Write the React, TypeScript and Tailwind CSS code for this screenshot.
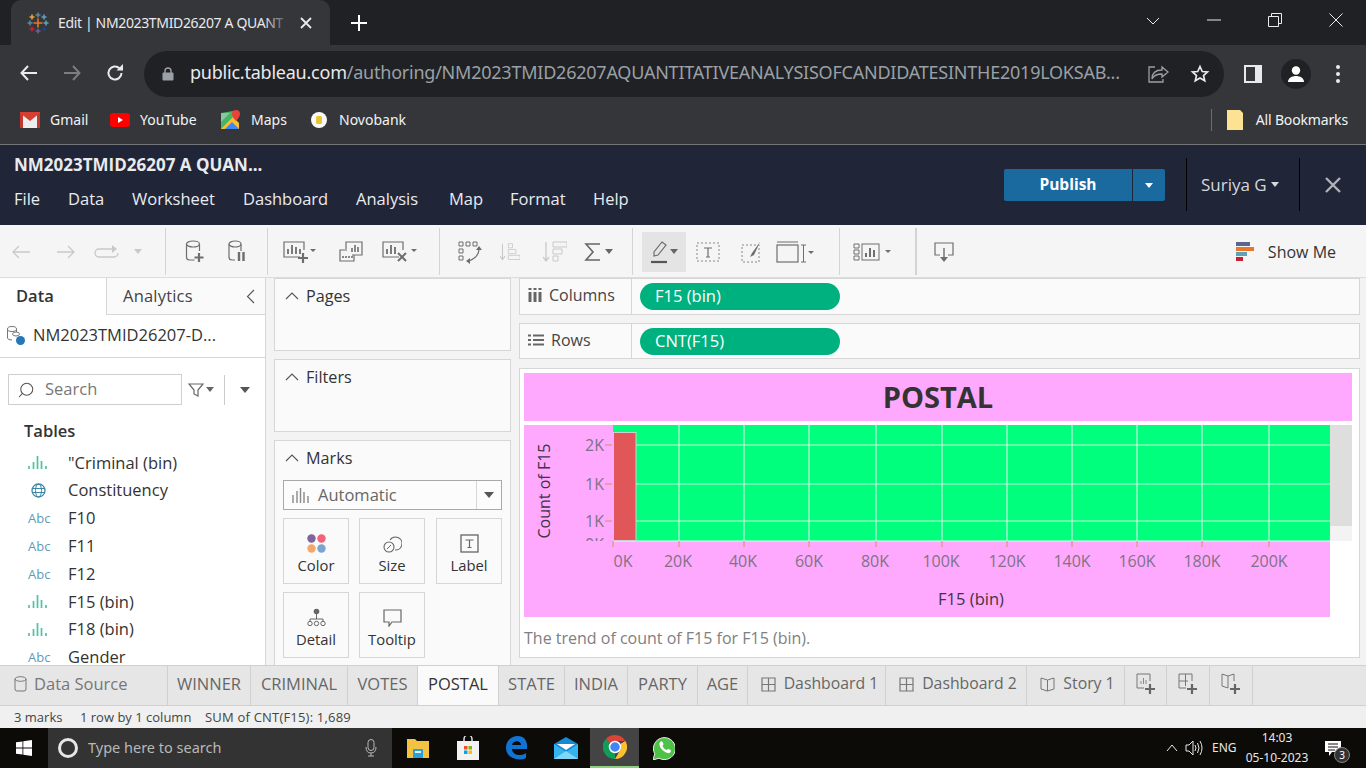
import type { ReactNode } from 'react'
import { Search } from 'lucide-react'

const ui = "font-['Open_Sans',sans-serif]"

function Caret({ className = 'border-t-[#666]' }: { className?: string }) {
  return <span className={`inline-block w-0 h-0 border-x-[4px] border-x-transparent border-t-[5px] ${className}`} />
}

function TableauLogo() {
  const plus = (x: number, y: number, s: number, c: string) => (
    <path key={`${x}${y}`} d={`M${x - s} ${y}H${x + s}M${x} ${y - s}V${y + s}`} stroke={c} strokeWidth="1.6" />
  )
  return (
    <svg width="22" height="22" viewBox="0 0 22 22">
      {plus(11, 11, 4.5, '#e8762d')}
      {plus(11, 3, 2.5, '#5b879b')}
      {plus(11, 19, 2.5, '#5c6692')}
      {plus(3, 11, 2.5, '#5b879b')}
      {plus(19, 11, 2.5, '#5fa2b8')}
      {plus(5, 5, 2.5, '#e8a33d')}
      {plus(17, 5, 2.5, '#5fa2b8')}
      {plus(5, 17, 2.5, '#c72035')}
      {plus(17, 17, 2.5, '#1f447e')}
    </svg>
  )
}

function Bookmark({ icon, label, w }: { icon: ReactNode; label: string; w: string }) {
  return (
    <div className={`flex items-center ${w}`}>
      <span className="w-[22px] flex justify-center">{icon}</span>
      <span className="ml-[9px] text-[14px] text-[#f1f3f4]">{label}</span>
    </div>
  )
}

function BrowserChrome() {
  return (
    <div className={`font-['Noto_Sans',sans-serif]`}>
      <div className="h-[45px] bg-[#202124] flex items-end">
        <div className="ml-[11px] w-[319px] h-[45px] rounded-t-[10px] bg-[#35363a] flex items-center pl-[16px] pr-[13px]">
          <TableauLogo />
          <div className="relative ml-[9px] w-[232px] overflow-hidden whitespace-nowrap text-[14px] tracking-[-0.35px] text-[#e8eaed]">
            Edit | NM2023TMID26207 A QUANT
            <span className="absolute right-0 top-0 h-full w-[26px] bg-gradient-to-r from-transparent to-[#35363a]" />
          </div>
          <svg width="12" height="12" viewBox="0 0 12 12" className="ml-[10px]">
            <path d="M1 1l10 10M11 1L1 11" stroke="#e8eaed" strokeWidth="1.8" />
          </svg>
        </div>
        <svg width="16" height="16" viewBox="0 0 16 16" className="ml-[21px] mb-[14px]">
          <path d="M8 0v16M0 8h16" stroke="#fff" strokeWidth="2" />
        </svg>
        <div className="ml-auto h-[45px] flex items-center">
          <svg width="14" height="8" viewBox="0 0 14 8" className="mr-[47px] mb-[3px]">
            <path d="M1 1l6 6 6-6" stroke="#e8eaed" fill="none" />
          </svg>
          <svg width="14" height="2" viewBox="0 0 14 2" className="mr-[47px] mb-[6px]">
            <path d="M0 1h14" stroke="#e8eaed" />
          </svg>
          <svg width="14" height="14" viewBox="0 0 14 14" className="mr-[47px] mb-[6px]">
            <path d="M.5 3.5h10v10H.5zM3.5 3V.5h10v10H11" stroke="#e8eaed" fill="none" />
          </svg>
          <svg width="14" height="14" viewBox="0 0 14 14" className="mr-[23px] mb-[6px]">
            <path d="M.5.5l13 13M13.5.5l-13 13" stroke="#e8eaed" />
          </svg>
        </div>
      </div>

      <div className="h-[53px] bg-[#35363a] flex items-center pt-[5px]">
        <svg width="18" height="16" viewBox="0 0 18 16" className="ml-[20px] -mt-[3px]">
          <path d="M17 8H2M8 1L1.500 8 8 15" stroke="#e8eaed" strokeWidth="2" fill="none" />
        </svg>
        <svg width="18" height="16" viewBox="0 0 18 16" className="ml-[25px] -mt-[3px]">
          <path d="M1 8h15M10 1l6.500 7L10 15" stroke="#7b7d80" strokeWidth="2" fill="none" />
        </svg>
        <svg width="18" height="18" viewBox="0 0 18 18" className="ml-[25px] -mt-[3px]">
          <path d="M15.500 9a6.500 6.500 0 1 1-2-4.700" stroke="#e8eaed" strokeWidth="2" fill="none" />
          <path d="M10.500 6.500H17V0z" fill="#e8eaed" />
        </svg>
        <div className="ml-[20px] w-[1080px] h-[46px] rounded-full bg-[#202124] flex items-center">
          <svg width="12" height="14" viewBox="0 0 12 14" className="ml-[18px]">
            <path d="M3 6V4a3 3 0 0 1 6 0v2" stroke="#9aa0a6" strokeWidth="1.400" fill="none" />
            <rect x="0.500" y="5.500" width="11" height="8" rx="1" fill="#9aa0a6" />
          </svg>
          <span className="ml-[16px] pb-[3px] w-[932px] whitespace-nowrap overflow-hidden text-[18px] tracking-[-0.23px] text-[#9aa0a6]">
            <span className="text-[#e8eaed]">public.tableau.com</span>
            /authoring/NM2023TMID26207AQUANTITATIVEANALYSISOFCANDIDATESINTHE2019LOKSAB...
          </span>
          <svg width="22" height="20" viewBox="0 0 22 20" className="ml-[25px]">
            <path d="M15 3l6 5-6 5v-3c-5 0-8 1-10 5 0-5 3-9 10-9zM8 3H2v15h14v-3" stroke="#9aa0a6" strokeWidth="1.300" fill="none" />
          </svg>
          <svg width="20" height="20" viewBox="0 0 24 24" className="ml-[21px]">
            <path d="M12 3l2.700 6 6.300.6-4.800 4.200 1.500 6.400L12 16.800l-5.700 3.400 1.500-6.400L3 9.600 9.300 9z" stroke="#e8eaed" strokeWidth="2" fill="none" />
          </svg>
        </div>
        <svg width="18" height="18" viewBox="0 0 18 18" className="ml-[20px]">
          <rect x="0" y="0" width="18" height="18" fill="#e8eaed" />
          <rect x="2" y="2" width="9" height="14" fill="#35363a" />
        </svg>
        <div className="ml-[19px] w-[30px] h-[30px] rounded-full bg-[#202124] flex items-center justify-center">
          <svg width="18" height="16" viewBox="0 0 18 16">
            <circle cx="9" cy="4.500" r="4.200" fill="#fff" />
            <path d="M1 16c0-4 4-6 8-6s8 2 8 6z" fill="#fff" />
          </svg>
        </div>
        <svg width="4" height="18" viewBox="0 0 4 18" className="ml-[25px]">
          <circle cx="2" cy="2" r="2" fill="#e8eaed" />
          <circle cx="2" cy="9" r="2" fill="#e8eaed" />
          <circle cx="2" cy="16" r="2" fill="#e8eaed" />
        </svg>
      </div>

      <div className="h-[47px] bg-[#35363a] border-b border-[#75767a] flex items-center pl-[19px] pb-[3px]">
        <Bookmark
          w="w-[90px]"
          label="Gmail"
          icon={
            <svg width="20" height="16" viewBox="0 0 20 16">
              <rect width="20" height="16" fill="#eee" />
              <path d="M0 0h3v16H0zM17 0h3v16h-3z" fill="#c5392c" />
              <path d="M0 1l10 8 10-8V0H0z" fill="#d93f30" />
            </svg>
          }
        />
        <Bookmark
          w="w-[111px]"
          label="YouTube"
          icon={
            <svg width="20" height="14" viewBox="0 0 20 14">
              <rect width="20" height="14" rx="3" fill="#f00" />
              <path d="M8 4l5 3-5 3z" fill="#fff" />
            </svg>
          }
        />
        <Bookmark
          w="w-[88px]"
          label="Maps"
          icon={
            <svg width="20" height="20" viewBox="0 0 20 20">
              <path d="M0 3l12-2v18L0 19z" fill="#48b564" />
              <path d="M0 19L12 7l6 6v6z" fill="#fdbf2d" />
              <path d="M0 3h9L0 12z" fill="#88c7a0" />
              <path d="M4 19l7-7 7 7z" fill="#4285f4" />
              <path d="M15 0a4 4 0 0 1 4 4c0 3-4 7-4 7s-4-4-4-7a4 4 0 0 1 4-4z" fill="#ea4335" />
            </svg>
          }
        />
        <Bookmark
          w="w-[150px]"
          label="Novobank"
          icon={
            <svg width="16" height="16" viewBox="0 0 16 16">
              <circle cx="8" cy="8" r="8" fill="#fafafa" />
              <rect x="5" y="4" width="6" height="8" rx="1.500" fill="#e9c62d" />
            </svg>
          }
        />
        <div className="ml-auto h-[22px] w-px bg-[#6b6c70]" />
        <svg width="16" height="20" viewBox="0 0 16 20" className="ml-[15px]">
          <path d="M0 0h13l3 3v17H0z" fill="#fde293" />
        </svg>
        <span className="ml-[13px] mr-[18px] text-[14px] tracking-[-0.15px] text-[#f1f3f4]">All Bookmarks</span>
      </div>
    </div>
  )
}

function TableauHeader() {
  const menu = [
    ['File', 'w-[54px]'],
    ['Data', 'w-[64px]'],
    ['Worksheet', 'w-[111px]'],
    ['Dashboard', 'w-[113px]'],
    ['Analysis', 'w-[93px]'],
    ['Map', 'w-[61px]'],
    ['Format', 'w-[83px]'],
    ['Help', 'w-[50px]'],
  ]
  return (
    <div className={`h-[80px] bg-[#212538] flex text-[#e9ebee] ${ui}`}>
      <div className="pl-[14px] flex-1">
        <div className="mt-[9px] h-[22px] leading-[22px] text-[17px] font-bold">NM2023TMID26207 A QUAN...</div>
        <div className="mt-[12px] flex text-[16.500px] leading-[22px]">
          {menu.map(([m, w]) => (
            <span key={m} className={w}>
              {m}
            </span>
          ))}
        </div>
      </div>
      <div className="mt-[24px] h-[32px] w-[161px] rounded-[2px] bg-[#1a699f] flex text-white">
        <span className="w-[128px] text-center font-bold text-[15.500px] leading-[30px]">Publish</span>
        <span className="w-px bg-[#212538]" />
        <span className="flex-1 flex items-center justify-center">
          <Caret className="border-t-white" />
        </span>
      </div>
      <div className="ml-[21px] mt-[13px] h-[53px] w-[114px] border-x border-black flex items-center pl-[14px] text-[17px] text-[#d5d8de]">
        Suriya G
        <Caret className="ml-[4px] border-t-[#d5d8de]" />
      </div>
      <div className="w-[66px] flex items-center justify-center">
        <svg width="16" height="16" viewBox="0 0 16 16">
          <path d="M1 1l14 14M15 1L1 15" stroke="#aeb1b8" strokeWidth="2.400" />
        </svg>
      </div>
    </div>
  )
}

function Slot({ w, children }: { w: string; children?: ReactNode }) {
  return <div className={`${w} h-full flex items-center justify-center`}>{children}</div>
}

function Sep({ className = 'w-px' }: { className?: string }) {
  return <div className={`${className} h-[47px] bg-[#d4d4d4]`} />
}

function Toolbar() {
  const g = '#6e6e6e'
  const l = '#c9c9c9'
  return (
    <div className={`h-[53px] bg-[#f5f5f5] flex items-center ${ui}`}>
      <Slot w="w-[42px]">
        <svg width="20" height="14" viewBox="0 0 20 14"><path d="M19 7H2M8 1L2 7l6 6" stroke={l} strokeWidth="1.300" fill="none" /></svg>
      </Slot>
      <Slot w="w-[48px]">
        <svg width="20" height="14" viewBox="0 0 20 14"><path d="M1 7h17M12 1l6 6-6 6" stroke={l} strokeWidth="1.300" fill="none" /></svg>
      </Slot>
      <Slot w="w-[32px]">
        <svg width="26" height="14" viewBox="0 0 26 14"><path d="M20 4H6a4 4 0 0 0 0 8h15a4 4 0 0 0 4-4" stroke={l} strokeWidth="1.300" fill="none" /><path d="M19 0l5 4-5 4z" fill={l} /></svg>
      </Slot>
      <Slot w="w-[32px]"><Caret className="border-t-[#c9c9c9]" /></Slot>
      <Slot w="w-[11px]" />
      <Sep />
      <Slot w="w-[58px]">
        <svg width="20" height="24" viewBox="0 0 20 24">
          <ellipse cx="8" cy="4" rx="6.500" ry="3" stroke={g} strokeWidth="1.200" fill="none" />
          <path d="M1.500 4v13q0 3 3 3h5M14.500 4v7" stroke={g} strokeWidth="1.200" fill="none" />
          <path d="M14 13v9M9.500 17.500h9" stroke={g} strokeWidth="2.200" />
        </svg>
      </Slot>
      <Slot w="w-[26px]">
        <svg width="18" height="24" viewBox="0 0 18 24">
          <ellipse cx="7" cy="4" rx="6" ry="3" stroke={g} strokeWidth="1.200" fill="none" />
          <path d="M1 4v13q0 3 3 3h3M13 4v7" stroke={g} strokeWidth="1.200" fill="none" />
          <path d="M11 12v9M15.500 12v9" stroke={g} strokeWidth="2.400" />
        </svg>
      </Slot>
      <Slot w="w-[17px]" />
      <Sep />
      <Slot w="w-[64px]">
        <svg width="34" height="24" viewBox="0 0 34 24">
          <path d="M17 17H1V2h20v8" stroke={g} strokeWidth="1.200" fill="none" />
          <path d="M5 9v5M9 5v9M13 7v7M17 9v5" stroke={g} strokeWidth="1.800" />
          <path d="M20 13v10M15 18h10" stroke={g} strokeWidth="2.200" />
          <path d="M27 9h6l-3 3z" fill={g} />
        </svg>
      </Slot>
      <Slot w="w-[38px]">
        <svg width="24" height="22" viewBox="0 0 24 22">
          <path d="M7 8V1h16v13H13M8 9H1v11h14v-6" stroke={g} strokeWidth="1.200" fill="none" />
          <path d="M13 11V7M16 11V4M19 11V6M4 17v-2M7 17v-2M10 17v-2M13 17v-2" stroke={g} strokeWidth="1.600" />
        </svg>
      </Slot>
      <Slot w="w-[60px]">
        <svg width="36" height="24" viewBox="0 0 36 24">
          <path d="M17 17H1V2h20v8" stroke={g} strokeWidth="1.200" fill="none" />
          <path d="M5 9v5M9 5v9M13 7v7" stroke={g} strokeWidth="1.800" />
          <path d="M16 13l8 8M24 13l-8 8" stroke={g} strokeWidth="2" />
          <path d="M29 9h6l-3 3z" fill={g} />
        </svg>
      </Slot>
      <Slot w="w-[9px]" />
      <Sep />
      <Slot w="w-[60px]">
        <svg width="24" height="24" viewBox="0 0 24 24">
          <path d="M1 2h4v4H1zM8 2h4v4H8zM15 2h4v4h-4zM1 9h4v4H1zM1 16h4v4H1z" stroke={g} fill="none" />
          <path d="M21 9q0 8-10 12" stroke={g} strokeWidth="1.200" fill="none" />
          <path d="M18 10l3-4 3 4zM12 18v6l-4-3z" fill={g} />
        </svg>
      </Slot>
      <Slot w="w-[20px]">
        <svg width="24" height="24" viewBox="0 0 24 24">
          <path d="M3 2v18M0 17l3 4 3-4" stroke={l} strokeWidth="1.300" fill="none" />
          <path d="M10 2h5v5h-5zM10 9h9v5h-9zM10 16h14v5H10z" stroke={l} fill="none" />
        </svg>
      </Slot>
      <Slot w="w-[70px]">
        <svg width="24" height="24" viewBox="0 0 24 24">
          <path d="M3 2v18M0 17l3 4 3-4" stroke={l} strokeWidth="1.300" fill="none" />
          <path d="M10 2h14v5H10zM10 9h9v5h-9zM10 16h5v5h-5z" stroke={l} fill="none" />
        </svg>
      </Slot>
      <Slot w="w-[16px]">
        <span className="flex items-center text-[#555]">
          <svg width="20" height="20" viewBox="0 0 20 20" className="shrink-0">
            <path d="M17 2H3l7 8-7 8h14" stroke="#666" strokeWidth="1.600" fill="none" />
          </svg>
          <Caret className="ml-[2px] border-t-[#666]" />
        </span>
      </Slot>
      <Slot w="w-[26px]" />
      <Sep />
      <Slot w="w-[9px]" />
      <div className="w-[44px] h-[40px] bg-[#e4e4e4] flex items-center justify-center">
        <svg width="16" height="24" viewBox="0 0 16 24">
          <path d="M11 2l4 3-8 10-4 1 0-4z" stroke={g} strokeWidth="1.200" fill="none" />
          <path d="M0 22h16" stroke="#555" strokeWidth="2.200" />
        </svg>
        <Caret className="ml-[3px] border-t-[#666]" />
      </div>
      <Slot w="w-[44px]">
        <svg width="24" height="20" viewBox="0 0 24 20">
          <rect x="1" y="1" width="22" height="18" stroke="#888" strokeDasharray="2 2" fill="none" />
          <path d="M8 6h8M12 6v9M10 15h4" stroke={g} strokeWidth="1.200" />
        </svg>
      </Slot>
      <Slot w="w-[44px]">
        <svg width="22" height="22" viewBox="0 0 22 22">
          <rect x="1" y="4" width="17" height="17" stroke="#888" strokeDasharray="2 2" fill="none" />
          <path d="M19 1l-8 11-2 4 4-2z" fill={g} />
        </svg>
      </Slot>
      <Slot w="w-[42px]">
        <svg width="38" height="22" viewBox="0 0 38 22">
          <rect x="1" y="4" width="21" height="17" stroke={g} strokeWidth="1.200" fill="none" />
          <path d="M1 1h21M25 4h5M27.500 4v17M25 21h5" stroke={g} />
          <path d="M32 10h6l-3 3z" fill={g} />
        </svg>
      </Slot>
      <Slot w="w-[23px]" />
      <Sep />
      <Slot w="w-[66px]">
        <svg width="40" height="20" viewBox="0 0 40 20">
          <path d="M1 2h5v4H1zM1 8h5v4H1zM1 14h5v4H1z" stroke={g} fill="none" />
          <rect x="9" y="2" width="17" height="16" stroke={g} fill="none" />
          <path d="M13 15v-4M17 15V6M21 15V8" stroke={g} strokeWidth="2" />
          <path d="M32 8h6l-3 3z" fill={g} />
        </svg>
      </Slot>
      <Slot w="w-[9px]" />
      <Sep className="w-[2px]" />
      <Slot w="w-[54px]">
        <svg width="20" height="20" viewBox="0 0 20 20">
          <path d="M6 13H1V1h18v12h-5" stroke={g} strokeWidth="1.200" fill="none" />
          <path d="M10 6v11" stroke={g} strokeWidth="1.400" />
          <path d="M6 15h8l-4 5z" fill={g} />
        </svg>
      </Slot>
      <div className="ml-auto mr-[30px] flex items-center text-[16px] text-[#333]">
        <svg width="18" height="20" viewBox="0 0 18 20" className="mr-[14px]">
          <path d="M0 0h14v4H0z" fill="#5b6591" />
          <path d="M0 5h18v4H0z" fill="#e8762d" />
          <path d="M0 10h11v4H0z" fill="#5fa2b8" />
          <path d="M0 15h7v4H0z" fill="#c72035" />
        </svg>
        Show Me
      </div>
    </div>
  )
}

const bars = (
  <svg width="19" height="13" viewBox="0 0 19 13">
    <path d="M1 13V10M5.500 13V6M9.500 13V0M13.500 13V5M18 13V10" stroke="#4fc3a1" strokeWidth="1.700" />
  </svg>
)

const globe = (
  <svg width="15" height="15" viewBox="0 0 15 15" className="ml-[3px]">
    <circle cx="7.500" cy="7.500" r="6.500" stroke="#3d87a6" strokeWidth="1.300" fill="none" />
    <ellipse cx="7.500" cy="7.500" rx="3" ry="6.500" stroke="#3d87a6" fill="none" />
    <path d="M1 5.500h13M1 9.500h13" stroke="#3d87a6" />
  </svg>
)

const abc = <span className="text-[13px] font-medium leading-none text-[#5d9cb8]">Abc</span>

const fields: [ReactNode, string][] = [
  [bars, '"Criminal (bin)'],
  [globe, 'Constituency'],
  [abc, 'F10'],
  [abc, 'F11'],
  [abc, 'F12'],
  [bars, 'F15 (bin)'],
  [bars, 'F18 (bin)'],
  [abc, 'Gender'],
]

function DataPane() {
  return (
    <div className="w-[266px] h-full bg-white border-r border-[#d6d6d6] overflow-hidden">
      <div className="h-[37px] flex text-[16.500px]">
        <div className="w-[107px] pl-[16px] leading-[36px] text-[#333] font-semibold border-r border-[#d6d6d6]">Data</div>
        <div className="flex-1 flex items-center pl-[16px] bg-[#fafafa] border-b border-[#d6d6d6] text-[#444] tracking-[0.2px]">
          Analytics
          <svg width="9" height="15" viewBox="0 0 9 15" className="ml-auto mr-[10px]">
            <path d="M8 1L1.500 7.500 8 14" stroke="#555" strokeWidth="1.100" fill="none" />
          </svg>
        </div>
      </div>
      <div className="h-[43px] border-b border-[#d6d6d6] flex items-center pl-[6px] pb-[2px] text-[16.500px] text-[#333]">
        <svg width="20" height="20" viewBox="0 0 20 20">
          <ellipse cx="6" cy="4" rx="4.500" ry="2.500" stroke="#777" fill="none" />
          <path d="M1.500 4v9q0 2 4.500 2M10.500 4v3" stroke="#777" fill="none" />
          <ellipse cx="10" cy="9" rx="3.500" ry="2" stroke="#777" fill="none" />
          <circle cx="14.500" cy="15.500" r="4.500" fill="#2677b5" />
        </svg>
        <span className="ml-[7px]">NM2023TMID26207-D...</span>
      </div>
      <div className="mt-[16px] flex items-center pl-[8px]">
        <div className="w-[174px] h-[31px] border border-[#cfcfcf] flex items-center pl-[8px] text-[16.500px] text-[#777]">
          <Search size={18} strokeWidth={1.400} className="-scale-x-100 text-[#555]" />
          <span className="ml-[10px]">Search</span>
        </div>
        <svg width="16" height="16" viewBox="0 0 16 16" className="ml-[6px]">
          <path d="M1 2h14L10 8v6L6 12V8z" stroke="#666" strokeWidth="1.200" fill="none" />
        </svg>
        <Caret className="ml-[2px] border-t-[#666]" />
        <span className="ml-[10px] w-px h-[30px] bg-[#ccc]" />
        <Caret className="ml-[15px] border-t-[#555] border-x-[5px] border-t-[6px]" />
      </div>
      <div className="mt-[15px] pl-[24px] h-[22px] leading-[22px] text-[16.500px] text-[#333] font-semibold">Tables</div>
      <div className="mt-[7px]">
        {fields.map(([icon, name]) => (
          <div key={name} className="h-[27.800px] flex items-center text-[16.500px] text-[#333]">
            <span className="w-[68px] pl-[28px] flex items-center">{icon}</span>
            {name}
          </div>
        ))}
      </div>
    </div>
  )
}

function CardTitle({ label }: { label: string }) {
  return (
    <div className="h-[36px] flex items-center pl-[10px] pb-[2px] text-[16.200px] text-[#333]">
      <svg width="14" height="8" viewBox="0 0 14 8">
        <path d="M1 7l6-6 6 6" stroke="#555" strokeWidth="1.100" fill="none" />
      </svg>
      <span className="ml-[7px]">{label}</span>
    </div>
  )
}

function MarkButton({ icon, label, className = '' }: { icon: ReactNode; label: string; className?: string }) {
  return (
    <div className={`w-[66px] h-[66px] border border-[#d6d6d6] flex flex-col items-center text-[14.800px] text-[#333] ${className}`}>
      <div className="h-[34px] flex items-end justify-center">{icon}</div>
      <span className="mt-[2px] leading-[20px]">{label}</span>
    </div>
  )
}

function CardsPane() {
  return (
    <div className="w-[237px] ml-[8px] flex flex-col gap-[8px] h-full overflow-hidden">
      <div className="h-[73px] shrink-0 bg-[#fafafa] border border-[#d6d6d6]"><CardTitle label="Pages" /></div>
      <div className="h-[73px] shrink-0 bg-[#fafafa] border border-[#d6d6d6]"><CardTitle label="Filters" /></div>
      <div className="h-[240px] shrink-0 bg-[#fafafa] border border-[#d6d6d6]">
        <CardTitle label="Marks" />
        <div className="ml-[8px] mt-[3px] w-[219px] h-[30px] border border-[#a9a9a9] bg-[#fcfcfc] flex items-center text-[16.500px] text-[#666]">
          <svg width="17" height="15" viewBox="0 0 17 15" className="ml-[8px]">
            <path d="M1 15V7M5 15V3M8.500 15V0M12 15V4M16 15V8" stroke="#888" strokeWidth="1.400" />
          </svg>
          <span className="ml-[9px] pt-[1px]">Automatic</span>
          <span className="ml-auto w-[25px] h-full border-l border-[#d6d6d6] flex items-center justify-center">
            <Caret className="border-t-[#555] border-x-[5px] border-t-[6px]" />
          </span>
        </div>
        <div className="ml-[8px] mt-[8px] flex">
          <MarkButton
            label="Color"
            icon={
              <svg width="19" height="19" viewBox="0 0 19 19">
                <circle cx="4.500" cy="4.500" r="4.200" fill="#80649b" />
                <circle cx="14.500" cy="4.500" r="4.200" fill="#f0637c" />
                <circle cx="4.500" cy="14.500" r="4.200" fill="#f4a76c" />
                <circle cx="14.500" cy="14.500" r="4.200" fill="#7ba5cf" />
              </svg>
            }
          />
          <MarkButton
            className="ml-[10px]"
            label="Size"
            icon={
              <svg width="19" height="19" viewBox="0 0 19 19">
                <path d="M7 6a6.500 6.500 0 1 1 5 10" stroke="#666" strokeWidth="1.100" fill="none" />
                <circle cx="6" cy="13" r="5" stroke="#666" strokeWidth="1.100" fill="none" />
                <path d="M4 15l4-4" stroke="#666" />
              </svg>
            }
          />
          <MarkButton
            className="ml-[11px]"
            label="Label"
            icon={
              <svg width="19" height="19" viewBox="0 0 19 19">
                <rect x="1" y="1" width="17" height="17" stroke="#666" strokeWidth="1.300" fill="none" />
                <path d="M5.500 6h8M9.500 6v7M7.500 13.500h4" stroke="#666" strokeWidth="1.200" fill="none" />
              </svg>
            }
          />
        </div>
        <div className="ml-[8px] mt-[8px] flex">
          <MarkButton
            label="Detail"
            icon={
              <svg width="19" height="19" viewBox="0 0 19 19">
                <circle cx="9.500" cy="3.500" r="2.800" fill="#666" />
                <path d="M9.500 6v5M3 13v-2h13v2" stroke="#666" fill="none" />
                <circle cx="3" cy="15.500" r="2.200" stroke="#666" fill="none" />
                <circle cx="9.500" cy="15.500" r="2.200" stroke="#666" fill="none" />
                <circle cx="16" cy="15.500" r="2.200" stroke="#666" fill="none" />
              </svg>
            }
          />
          <MarkButton
            className="ml-[10px]"
            label="Tooltip"
            icon={
              <svg width="19" height="18" viewBox="0 0 19 18">
                <path d="M1 1h17v12H9l-3 4v-4H1z" stroke="#666" strokeWidth="1.200" fill="none" />
              </svg>
            }
          />
        </div>
      </div>
    </div>
  )
}

function Shelf({ icon, label, pill, h, pt }: { icon: ReactNode; label: string; pill: string; h: string; pt: string }) {
  return (
    <div className={`${h} shrink-0 bg-[#fafafa] border border-[#d6d6d6] flex`}>
      <div className="w-[112px] border-r border-[#d6d6d6] flex items-center pl-[8px] pb-[3px] text-[16px] text-[#444]">
        {icon}
        <span className="ml-[7px]">{label}</span>
      </div>
      <div className={`ml-[8px] ${pt}`}>
        <div className="w-[200px] h-[27px] rounded-full bg-[#00b180] pl-[15px] leading-[25px] text-[16.500px] text-white">{pill}</div>
      </div>
    </div>
  )
}

function Chart() {
  const xs: [number, string, number][] = [
    [89, '0K', 99],
    [155, '20K', 154],
    [220, '40K', 219],
    [285, '60K', 285],
    [352, '80K', 351],
    [418, '100K', 417],
    [483, '120K', 483],
    [548, '140K', 548],
    [613, '160K', 613],
    [678, '180K', 678],
    [745, '200K', 745],
  ]
  const ys: [number, string][] = [
    [20, '2K'],
    [59, '1K'],
    [96, '1K'],
  ]
  return (
    <svg width="828" height="192" viewBox="0 0 828 192" className="block">
      <defs>
        <clipPath id="yaxis">
          <rect x="40" y="0" width="49" height="116" />
        </clipPath>
      </defs>
      <rect width="806" height="192" fill="#ffa9fe" />
      <rect x="806" width="22" height="116" fill="#f3f3f3" />
      <rect x="806" width="22" height="101" fill="#dedede" />
      <rect x="89" width="717" height="116" fill="#00ff7c" />
      {ys.map(([y]) => (
        <line key={y} x1="89" x2="806" y1={y} y2={y} stroke="#c9f5dc" strokeWidth="1.200" />
      ))}
      {xs.slice(1).map(([x]) => (
        <line key={x} x1={x} x2={x} y1="0" y2="116" stroke="#c9f5dc" strokeWidth="1.200" />
      ))}
      <line x1="89" x2="806" y1="116" y2="116" stroke="#eef" strokeWidth="1" />
      <rect x="89.500" y="7.500" width="22.500" height="108" fill="#e15759" stroke="#cfcfcf" />
      {ys.map(([y, t]) => (
        <g key={y}>
          <line x1="81" x2="88" y1={y} y2={y} stroke="#c89a50" />
          <text x="80" y={y + 6} textAnchor="end" fontSize="16" fill="#7d7385" fontFamily="Open Sans, sans-serif">{t}</text>
        </g>
      ))}
      <g clipPath="url(#yaxis)">
        <text x="80" y="125" textAnchor="end" fontSize="16" fill="#7d7385" fontFamily="Open Sans, sans-serif">0K</text>
      </g>
      {xs.map(([x, t, lx]) => (
        <g key={t}>
          <line x1={x} x2={x} y1="116" y2="122" stroke="#c89a50" />
          <text x={lx} y="142" textAnchor="middle" fontSize="16" fill="#7d7385" fontFamily="Open Sans, sans-serif">{t}</text>
        </g>
      ))}
      <text x="447" y="180" textAnchor="middle" fontSize="16.500" fill="#3d3446" fontFamily="Open Sans, sans-serif">F15 (bin)</text>
      <text transform="translate(26 66) rotate(-90)" textAnchor="middle" fontSize="16" fill="#3d3446" fontFamily="Open Sans, sans-serif">Count of F15</text>
    </svg>
  )
}

function ViewPane() {
  return (
    <div className="w-[841px] ml-[8px] h-full flex flex-col">
      <Shelf
        h="h-[37px]"
        pt="pt-[4px]"
        label="Columns"
        pill="F15 (bin)"
        icon={
          <svg width="14" height="14" viewBox="0 0 14 14">
            <path d="M2 4v10M7 4v10M12 4v10" stroke="#666" strokeWidth="3" />
            <path d="M2 0v2M7 0v2M12 0v2" stroke="#666" strokeWidth="3" />
          </svg>
        }
      />
      <div className="h-[8px] shrink-0" />
      <Shelf
        h="h-[36px]"
        pt="pt-[4px]"
        label="Rows"
        pill="CNT(F15)"
        icon={
          <svg width="16" height="12" viewBox="0 0 16 12">
            <path d="M0 1.500h3M5 1.500h11M0 6h3M5 6h11M0 10.500h3M5 10.500h11" stroke="#666" strokeWidth="2" />
          </svg>
        }
      />
      <div className="mt-[9px] h-[290px] bg-white border border-[#d6d6d6] pl-[4px] pt-[4px]">
        <div className="w-[828px] h-[48px] bg-[#ffa9fe] flex items-center justify-center text-[29px] font-bold text-[#333]">POSTAL</div>
        <div className="mt-[4px]"><Chart /></div>
        <div className="mt-[11px] text-[16px] leading-[20px] text-[#808080]">The trend of count of F15 for F15 (bin).</div>
      </div>
    </div>
  )
}

function SheetTab({ w, label, active, icon, cls = 'text-[16.500px]' }: { w: string; label?: string; active?: boolean; icon?: ReactNode; cls?: string }) {
  return (
    <div
      className={`${w} ${cls} shrink-0 h-full flex items-center justify-center pb-[3px] border-r border-[#d0d0d0] ${
        active ? 'bg-[#fafafa] text-[#333]' : 'text-[#666]'
      }`}
    >
      {icon}
      {label && <span className={icon ? 'ml-[8px]' : ''}>{label}</span>}
    </div>
  )
}

const dashIcon = (
  <svg width="15" height="15" viewBox="0 0 15 15">
    <path d="M1 1h13v13H1zM7.500 1v13M1 7.500h13" stroke="#777" strokeWidth="1.200" fill="none" />
  </svg>
)

const storyIcon = (
  <svg width="15" height="15" viewBox="0 0 15 15">
    <path d="M1 1l6.500 2L14 1v11l-6.500 2L1 12zM7.500 3v11" stroke="#777" fill="none" />
  </svg>
)

function PlusIcon({ children }: { children: ReactNode }) {
  return (
    <svg width="22" height="22" viewBox="0 0 22 22">
      {children}
      <path d="M15 11v10M10 16h10" stroke="#666" strokeWidth="2.200" />
    </svg>
  )
}

function SheetTabs() {
  return (
    <div className={`h-[41px] bg-[#e6e6e6] border-y border-[#d0d0d0] flex ${ui}`}>
      <div className="w-[168px] shrink-0 h-full flex items-center pl-[14px] pb-[3px] border-r border-[#d0d0d0] text-[16.500px] text-[#777]">
        <svg width="13" height="16" viewBox="0 0 13 16">
          <ellipse cx="6.500" cy="3" rx="5.500" ry="2.300" stroke="#777" fill="none" />
          <path d="M1 3v10q0 2 2 2h7q2 0 2-2V3" stroke="#777" fill="none" />
        </svg>
        <span className="ml-[7px]">Data Source</span>
      </div>
      <SheetTab w="w-[83px]" label="WINNER" />
      <SheetTab w="w-[97px]" label="CRIMINAL" />
      <SheetTab w="w-[70px]" label="VOTES" />
      <SheetTab w="w-[81px]" label="POSTAL" active />
      <SheetTab w="w-[66px]" label="STATE" />
      <SheetTab w="w-[63px]" label="INDIA" />
      <SheetTab w="w-[70px]" label="PARTY" />
      <SheetTab w="w-[50px]" label="AGE" />
      <SheetTab w="w-[138px]" cls="text-[15.800px] pl-[6px]" label="Dashboard 1" icon={dashIcon} />
      <SheetTab w="w-[141px]" cls="text-[15.800px] pl-[4px]" label="Dashboard 2" icon={dashIcon} />
      <SheetTab w="w-[98px]" cls="text-[15.800px] pl-[4px]" label="Story 1" icon={storyIcon} />
      <SheetTab
        w="w-[42px]"
        icon={
          <PlusIcon>
            <path d="M9 15H2V1h13v7" stroke="#777" fill="none" />
            <path d="M6 11V8M8.500 11V5M11 11V7" stroke="#888" />
          </PlusIcon>
        }
      />
      <SheetTab
        w="w-[43px]"
        icon={
          <PlusIcon>
            <path d="M9 15H2V1h13v7M8.500 1v12M2 8h9" stroke="#777" fill="none" />
          </PlusIcon>
        }
      />
      <SheetTab
        w="w-[43px]"
        icon={
          <PlusIcon>
            <path d="M8 15l-6-2V1l6 2 6-2v7M8 3v12" stroke="#777" fill="none" />
          </PlusIcon>
        }
      />
    </div>
  )
}

function StatusBar() {
  return (
    <div className={`h-[22px] bg-[#f0f0f0] flex items-center pl-[14px] pt-[1px] text-[13px] text-[#444] ${ui}`}>
      <span className="w-[66px]">3 marks</span>
      <span className="w-[125px]">1 row by 1 column</span>
      <span className="tracking-[0.2px]">SUM of CNT(F15): 1,689</span>
    </div>
  )
}

function Taskbar() {
  return (
    <div className="h-[40px] bg-[#0c0b08] flex items-center font-['Noto_Sans',sans-serif]">
      <div className="w-[48px] flex justify-center">
        <svg width="16" height="16" viewBox="0 0 16 16">
          <path d="M0 2.300l6.500-.9v6.200H0zM7.300 1.300L16 0v7.600H7.300zM0 8.400h6.500v6.200L0 13.700zM7.300 8.400H16V16l-8.700-1.300z" fill="#fff" />
        </svg>
      </div>
      <div className="w-[344px] h-[40px] bg-[#333] flex items-center pl-[10px] text-[14.500px] text-[#b8b8b8]">
        <span className="w-[20px] h-[20px] rounded-full border-[3px] border-[#e6e6e6]" />
        <span className="ml-[10px]">Type here to search</span>
        <svg width="12" height="18" viewBox="0 0 12 18" className="ml-auto mr-[15px]">
          <rect x="3" y="0.500" width="6" height="11" rx="3" stroke="#b8b8b8" fill="none" />
          <path d="M1 8q0 6 5 6t5-6M6 14v3M3 17h6" stroke="#b8b8b8" fill="none" />
        </svg>
      </div>
      <div className="w-[50px] ml-[1px] flex justify-center">
        <svg width="22" height="20" viewBox="0 0 22 20">
          <path d="M0 1h8l2 2h12v17H0z" fill="#f4c242" />
          <path d="M6 11h10v9H6z" fill="#2a9fd8" />
          <path d="M8 13h6v2H8z" fill="#dff3fb" />
        </svg>
      </div>
      <div className="w-[49px] flex justify-center">
        <svg width="22" height="24" viewBox="0 0 22 24">
          <path d="M7 6V3a4 4 0 0 1 8 0v3" stroke="#ddd" strokeWidth="1.500" fill="none" />
          <rect y="5" width="22" height="19" fill="#f2f2f2" />
          <path d="M7 10h3.500v3.500H7z" fill="#f25022" />
          <path d="M11.500 10H15v3.500h-3.500z" fill="#7fba00" />
          <path d="M7 14.500h3.500V18H7z" fill="#00a4ef" />
          <path d="M11.500 14.500H15V18h-3.500z" fill="#ffb900" />
        </svg>
      </div>
      <div className="w-[49px] flex justify-center">
        <svg width="22" height="24" viewBox="0 0 22 24">
          <path d="M21 13H6c0 6 9 8 14 4v5C12 26 0 22 0 12 0 4 6 0 12 0c6 0 10 5 9 13zM6 9h9c0-5-8-5-9 0z" fill="#0f74d6" />
        </svg>
      </div>
      <div className="w-[49px] flex justify-center">
        <svg width="24" height="22" viewBox="0 0 24 22">
          <path d="M12 0L0 7v15h24V7z" fill="#1589d6" />
          <path d="M0 7l12 8 12-8v15H0z" fill="#34b4ee" />
          <path d="M0 22l12-8 12 8z" fill="#7fd6f6" />
          <path d="M3 7h18l-9 6z" fill="#fff" />
        </svg>
      </div>
      <div className="w-[49px] h-[40px] bg-[#444] border-b-[2px] border-[#8ccf7e] flex items-center justify-center">
        <svg width="24" height="24" viewBox="0 0 24 24">
          <path d="M12 0a12 12 0 0 1 10.400 6H12a6 6 0 0 0-5.200 3L3.100 3.700A12 12 0 0 1 12 0z" fill="#db4437" />
          <path d="M22.400 6A12 12 0 0 1 12 24l5.200-9a6 6 0 0 0 0-6z" fill="#fbc02d" />
          <path d="M12 24A12 12 0 0 1 3.100 3.700L6.800 9a6 6 0 0 0 5.200 9z" fill="#0f9d58" />
          <circle cx="12" cy="12" r="5.500" fill="#4285f4" stroke="#fff" strokeWidth="1.500" />
        </svg>
      </div>
      <div className="w-[49px] flex justify-center">
        <svg width="22" height="24" viewBox="0 0 22 24">
          <path d="M0 24l1.700-6.200A11 11 0 1 1 6 22.200z" fill="#4dc247" stroke="#eee" />
          <path d="M7 6c1-1 2-1 2.500 0l1 2c0 1-1 1.500-1 2 1 2 2 3 4 4 .5 0 1-1 2-1l2 1c1 .5 0 2.500-1 3-3 1-11-4-10-10z" fill="#fff" />
        </svg>
      </div>
      <div className="ml-auto flex items-center text-[#e8e8e8]">
        <svg width="12" height="8" viewBox="0 0 12 8" className="mr-[7px]">
          <path d="M1 7l5-6 5 6" stroke="#e8e8e8" fill="none" />
        </svg>
        <svg width="18" height="16" viewBox="0 0 18 16" className="mr-[9px]">
          <path d="M1 5h3l4-4v14l-4-4H1zM10 5q2 3 0 6M12.500 3q3 5 0 10M15 1q4 7 0 14" stroke="#e8e8e8" fill="none" />
        </svg>
        <span className="text-[12px] w-[30px]">ENG</span>
        <div className="w-[70px] text-center text-[12px] leading-[20px]">
          <div>14:03</div>
          <div>05-10-2023</div>
        </div>
        <div className="relative w-[42px] flex justify-center mr-[12px]">
          <svg width="16" height="15" viewBox="0 0 16 15">
            <path d="M0 0h16v11h-9l-3 4v-4H0z" fill="#fff" />
            <path d="M3 3h10M3 6h10M3 9h7" stroke="#111" />
          </svg>
          <span className="absolute left-[22px] top-[6px] w-[16px] h-[16px] rounded-full bg-[#333] border border-[#888] text-[10px] leading-[14px] text-center text-white">3</span>
        </div>
      </div>
    </div>
  )
}

export default function App() {
  return (
    <div className="w-[1366px] h-[768px] overflow-hidden flex flex-col bg-[#f3f3f3]">
      <BrowserChrome />
      <TableauHeader />
      <Toolbar />
      <div className={`h-[388px] flex border-t border-[#dcdcdc] -mt-px ${ui}`}>
        <DataPane />
        <CardsPane />
        <ViewPane />
      </div>
      <SheetTabs />
      <StatusBar />
      <Taskbar />
    </div>
  )
}
